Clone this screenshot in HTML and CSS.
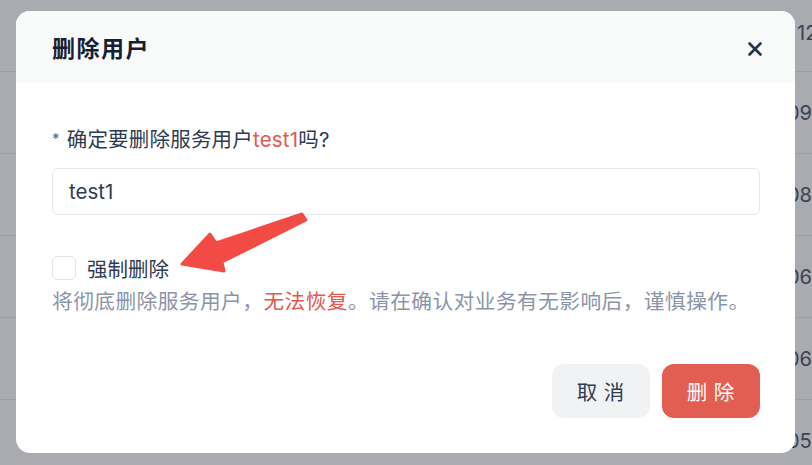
FILE: index.html
```html
<!DOCTYPE html>
<html lang="zh">
<head>
<meta charset="utf-8">
<link rel="stylesheet" href="styles.css">
</head>
<body>
<div class="table">
  <div class="row first"><span class="cell">12:30</span></div>
  <div class="row"><span class="cell c2">09:12</span></div>
  <div class="row"><span class="cell c2">08:45</span></div>
  <div class="row"><span class="cell c2">06:21</span></div>
  <div class="row"><span class="cell c2">06:03</span></div>
  <div class="row last"><span class="cell c2">05:10</span></div>
</div>

<div class="modal">
  <div class="modal-header">
    <h2 class="title">删除用户</h2>
    <svg class="close" width="16" height="16" viewBox="0 0 16 16"><path d="M2.5 2.5 L13.5 13.5 M13.5 2.5 L2.5 13.5" stroke="#25324a" stroke-width="2.6" stroke-linecap="round"/></svg>
  </div>
  <div class="modal-body">
    <div class="label"><span class="star">*</span> 确定要删除服务用户<span class="red">test1</span>吗?</div>
    <div class="input">test1</div>
    <div class="check-row"><span class="checkbox"></span><span class="check-text">强制删除</span></div>
    <div class="desc">将彻底删除服务用户，<span class="red">无法恢复</span>。请在确认对业务有无影响后，谨慎操作。</div>
  </div>
  <div class="modal-footer">
    <button class="btn btn-cancel">取 消</button>
    <button class="btn btn-danger">删 除</button>
  </div>
</div>

<svg class="arrow" width="812" height="465" viewBox="0 0 812 465">
  <polygon points="182,264 210,234 216,243 302,214 306,220 222,262 224,271" fill="#f24b46" stroke="#f24b46" stroke-width="3" stroke-linejoin="round"/>
</svg>
</body>
</html>
```

FILE: styles.css
```css
html, body {
  margin: 0;
  padding: 0;
}
body {
  width: 812px;
  height: 465px;
  overflow: hidden;
  background: #aaabb0;
  font-family: "Inter", "Noto Sans CJK SC", sans-serif;
  position: relative;
}
.table {
  display: flex;
  flex-direction: column;
}
.row {
  height: 81px;
  border-bottom: 1px solid #9d9ea5;
  display: flex;
  align-items: center;
}
.row.first {
  height: 71px;
  align-items: flex-start;
}
.row.last {
  border-bottom: none;
}
.cell {
  padding-left: 795px;
  font-size: 20px;
  color: #3a4254;
  white-space: nowrap;
}
.row.first .cell {
  padding-top: 21px;
  padding-left: 797px;
}
.cell.c2 {
  padding-left: 787px;
}
.modal {
  position: absolute;
  left: 16px;
  top: 11px;
  width: 779px;
  height: 442px;
  background: #ffffff;
  border-radius: 14px;
  overflow: hidden;
  display: flex;
  flex-direction: column;
}
.modal-header {
  height: 72px;
  background: #f9fbfb;
  display: flex;
  align-items: center;
  justify-content: space-between;
  padding: 0 32px 0 36px;
  box-sizing: border-box;
}
.title {
  margin: 0;
  font-size: 23px;
  font-weight: 700;
  color: #172033;
  letter-spacing: 1.5px;
  line-height: 30px;
  font-family: "Noto Sans CJK SC", sans-serif;
  margin-top: -1px;
}
.close {
  margin-top: 4px;
}
.modal-body {
  padding: 41px 35px 0 36px;
  display: flex;
  flex-direction: column;
}
.label {
  font-size: 20.5px;
  line-height: 30px;
  color: #2f3b52;
  font-family: "Inter", "Noto Sans CJK SC", sans-serif;
  letter-spacing: 0.2px;
}
.star {
  font-size: 15px;
  color: #5d6677;
  vertical-align: 3px;
  margin-right: 1px;
}
.red {
  color: #e4574b;
}
.input {
  margin-top: 13px;
  height: 47px;
  box-sizing: border-box;
  border: 1px solid #e3e6ec;
  border-radius: 6px;
  padding: 0 16px;
  display: flex;
  align-items: center;
  font-size: 20.5px;
  color: #2f3b52;
}
.check-row {
  margin-top: 38px;
  height: 30px;
  display: flex;
  align-items: center;
  gap: 11px;
}
.checkbox {
  width: 24px;
  height: 24px;
  box-sizing: border-box;
  border: 1px solid #e1e4ec;
  border-radius: 5px;
  background: #fff;
}
.check-text {
  font-size: 20.5px;
  color: #2f3b52;
  font-family: "Noto Sans CJK SC", sans-serif;
}
.desc {
  margin-top: 2px;
  line-height: 30px;
  font-size: 20.7px;
  letter-spacing: 0.45px;
  color: #8b95a7;
  font-family: "Noto Sans CJK SC", sans-serif;
  white-space: nowrap;
}
.modal-footer {
  margin-top: auto;
  padding: 0 35px 35px 0;
  display: flex;
  justify-content: flex-end;
  gap: 12px;
}
.btn {
  width: 98px;
  height: 54px;
  border: none;
  border-radius: 12px;
  font-size: 20.5px;
  font-family: "Noto Sans CJK SC", sans-serif;
  padding: 0;
  letter-spacing: 1px;
}
.btn-cancel {
  background: #f1f2f4;
  color: #2f3b52;
}
.btn-danger {
  background: #e35e52;
  color: #ffffff;
}
.arrow {
  position: absolute;
  left: 0;
  top: 0;
  pointer-events: none;
}
```
